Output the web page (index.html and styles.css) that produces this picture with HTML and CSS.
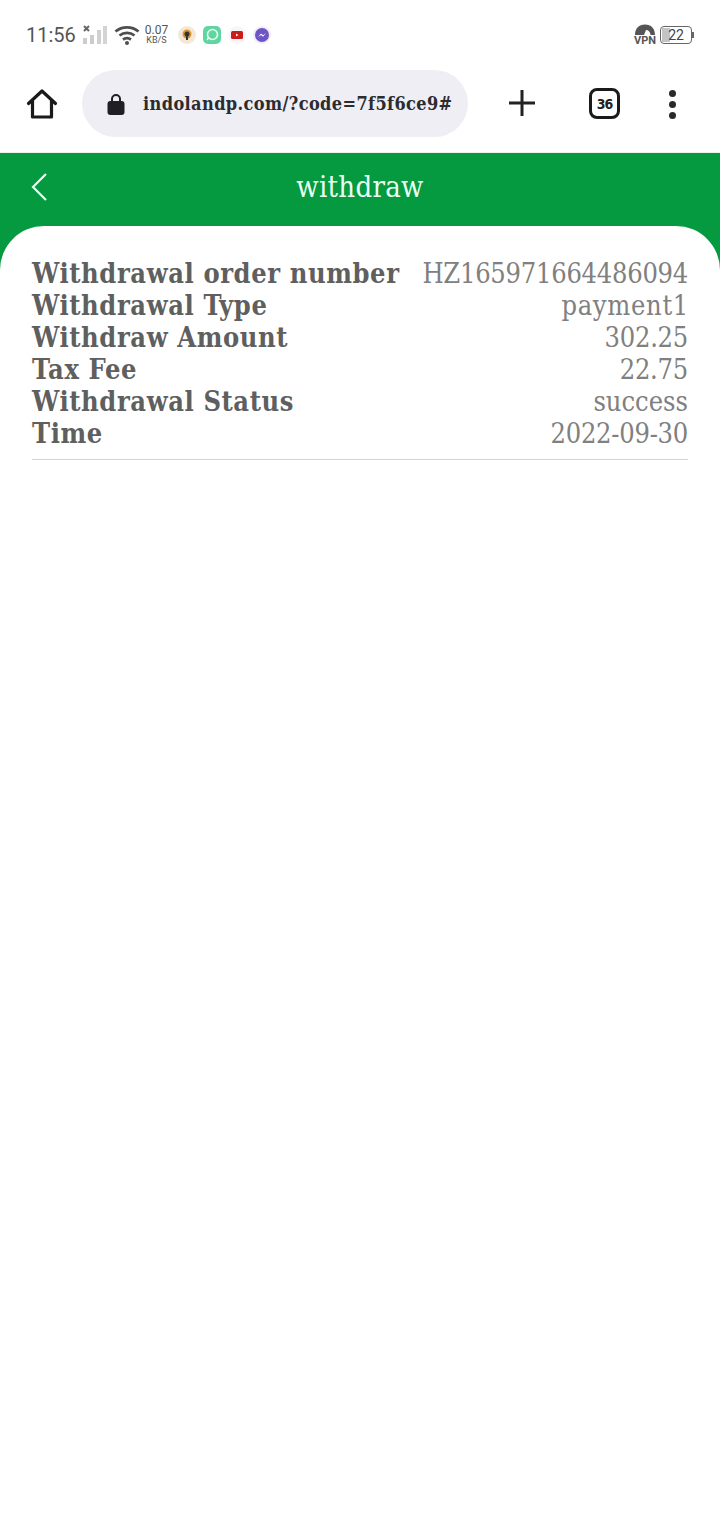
FILE: index.html
```html
<!DOCTYPE html>
<html lang="en">
<head>
    <meta charset="UTF-8">
    <title>withdraw</title>
    <link rel="stylesheet" href="styles.css">
</head>
<body>
    <div class="status-bar">
        <span class="clock">11:56</span>
        <svg class="signal" width="26" height="20" viewBox="0 0 26 20">
            <path d="M2 1l5 5M7 1L2 6" stroke="#666" stroke-width="2"/>
            <rect x="1" y="13" width="4" height="6" fill="#ccc"/>
            <rect x="8" y="10" width="4" height="9" fill="#ccc"/>
            <rect x="15" y="5" width="4" height="14" fill="#d0d0d0"/>
            <rect x="21" y="1" width="4" height="18" fill="#d4d4d4"/>
        </svg>
        <svg class="wifi" width="26" height="20" viewBox="0 0 26 20">
            <path d="M1.500 6.500C8 1 18 1 24.500 6.500M5.500 10.500C10 7 16 7 20.500 10.500M9 14.500c2.500-1.800 5.500-1.800 8 0" fill="none" stroke="#4f4f4f" stroke-width="2.800"/>
            <circle cx="13" cy="18" r="2" fill="#4f4f4f"/>
        </svg>
        <div class="speed">
            <span class="speed-num">0.07</span>
            <span class="speed-unit">KB/S</span>
        </div>
        <div class="app-icons">
            <svg width="20" height="20" viewBox="0 0 20 20">
                <circle cx="10" cy="10" r="9" fill="#f3e8d8"/>
                <circle cx="10" cy="9" r="4.500" fill="#d9952f"/>
                <circle cx="10" cy="9" r="2.500" fill="#333"/>
                <rect x="9" y="9" width="2" height="6" fill="#333"/>
            </svg>
            <svg width="20" height="20" viewBox="0 0 20 20">
                <rect x="1" y="1" width="18" height="18" rx="5" fill="#5fd6a0"/>
                <circle cx="10.500" cy="9.500" r="5" fill="none" stroke="#e8fff4" stroke-width="1.600"/>
                <path d="M5 15l2-3" stroke="#e8fff4" stroke-width="1.600"/>
            </svg>
            <svg width="20" height="20" viewBox="0 0 20 20">
                <circle cx="10" cy="10" r="9" fill="#f8f6f6"/>
                <rect x="4" y="6" width="12" height="8" rx="1.500" fill="#cf1a1a"/>
                <path d="M9 8.500v3l2.500-1.500z" fill="#fff"/>
            </svg>
            <svg width="20" height="20" viewBox="0 0 20 20">
                <circle cx="10" cy="10" r="9" fill="#f1edf6"/>
                <circle cx="10" cy="10" r="7" fill="#6d55c8"/>
                <path d="M6 12l3-3.500 2 1.800 3-2.300-3 3.800-2-1.800z" fill="#fff"/>
            </svg>
        </div>
        <div class="status-right">
            <div class="vpn">
                <svg width="22" height="11" viewBox="0 0 22 11">
                    <path d="M1 11C1 4.500 5 0.500 11 0.500S21 4.500 21 11h-4.500C16.500 8 14.500 6 12 6l-2 5z" fill="#555"/>
                </svg>
                <span class="vpn-label">VPN</span>
            </div>
            <div class="battery">
                <div class="battery-body">
                    <span class="battery-fill"></span>
                    <span class="battery-num">22</span>
                </div>
                <span class="battery-tip"></span>
            </div>
        </div>
    </div>

    <div class="browser-bar">
        <svg class="home" width="32" height="32" viewBox="0 0 32 32">
            <path d="M2.500 15.500L16 3l13.500 12.500M6.500 12.500V29h19V12.500" fill="none" stroke="#1a1a1a" stroke-width="3.200" stroke-linejoin="round" stroke-linecap="round"/>
        </svg>
        <div class="url-box">
            <svg width="18" height="24" viewBox="0 0 18 24">
                <path d="M5 10V7a4 4 0 0 1 8 0v3" fill="none" stroke="#1f1f24" stroke-width="2"/>
                <rect x="0.500" y="9" width="17" height="14" rx="3" fill="#1f1f24"/>
            </svg>
            <span class="url-text">indolandp.com/?code=7f5f6ce9#</span>
        </div>
        <svg class="plus" width="28" height="28" viewBox="0 0 28 28">
            <path d="M14 1v26M1 14h26" stroke="#222" stroke-width="3"/>
        </svg>
        <div class="tabs">36</div>
        <div class="menu-dots">
            <span></span>
            <span></span>
            <span></span>
        </div>
    </div>

    <div class="page">
        <div class="title-bar">
            <svg class="back" width="18" height="30" viewBox="0 0 18 30">
                <path d="M16 2L3 15l13 13" fill="none" stroke="#e6fff2" stroke-width="2.200"/>
            </svg>
            <span class="title">withdraw</span>
        </div>
        <div class="card">
            <div class="details">
                <div class="row"><span class="key">Withdrawal order number</span><span class="val num">HZ165971664486094</span></div>
                <div class="row"><span class="key">Withdrawal Type</span><span class="val word">payment1</span></div>
                <div class="row"><span class="key">Withdraw Amount</span><span class="val num">302.25</span></div>
                <div class="row"><span class="key">Tax Fee</span><span class="val num">22.75</span></div>
                <div class="row"><span class="key">Withdrawal Status</span><span class="val">success</span></div>
                <div class="row"><span class="key">Time</span><span class="val num">2022-09-30</span></div>
            </div>
        </div>
    </div>
</body>
</html>
```

FILE: styles.css
```css
/* General Styles */
html, body {
    height: 100%;
}

body {
    margin: 0;
    background-color: #fff;
    font-family: "Roboto", sans-serif;
    display: flex;
    flex-direction: column;
    overflow: hidden;
}

/* Phone status bar */
.status-bar {
    height: 70px;
    display: flex;
    align-items: center;
    padding: 0 26px;
    flex-shrink: 0;
}

.clock {
    font-size: 20px;
    color: #555;
    margin-right: 6px;
}

.signal {
    margin-right: 6px;
}

.wifi {
    margin-right: 5px;
}

.speed {
    display: flex;
    flex-direction: column;
    align-items: center;
    color: #555;
    line-height: 10px;
    margin-right: 9px;
}

.speed-num {
    font-size: 12px;
}

.speed-unit {
    font-size: 9px;
}

.app-icons {
    display: flex;
    gap: 5px;
}

.status-right {
    margin-left: auto;
    display: flex;
    align-items: center;
    gap: 4px;
}

.vpn {
    display: flex;
    flex-direction: column;
    align-items: center;
    color: #555;
}

.vpn svg {
    display: block;
}

.vpn-label {
    font-size: 11px;
    font-weight: 700;
    line-height: 11px;
}

.battery {
    display: flex;
    align-items: center;
}

.battery-body {
    position: relative;
    width: 32px;
    height: 18px;
    box-sizing: border-box;
    border: 1.5px solid #666;
    border-radius: 4px;
    display: flex;
    align-items: center;
    justify-content: center;
}

.battery-fill {
    position: absolute;
    left: 1px;
    top: 1px;
    bottom: 1px;
    width: 8px;
    background: #c4c4c4;
}

.battery-num {
    position: relative;
    font-size: 14px;
    color: #444;
}

.battery-tip {
    width: 2px;
    height: 6px;
    background: #666;
}

/* Browser toolbar */
.browser-bar {
    height: 82px;
    display: flex;
    align-items: flex-start;
    flex-shrink: 0;
    border-bottom: 1px solid #e3f5ea;
}

.home {
    margin: 18px 0 0 26px;
}

.url-box {
    margin: 0 0 0 24px;
    width: 386px;
    height: 67px;
    box-sizing: border-box;
    background: #eeeef4;
    border-radius: 34px;
    display: flex;
    align-items: center;
    padding-left: 25px;
}

.url-text {
    margin-left: 18px;
    font-family: "DejaVu Serif Condensed", "DejaVu Serif", serif;
    font-size: 18px;
    font-weight: 700;
    letter-spacing: 0.38px;
    color: #2b2b30;
    white-space: nowrap;
}

.plus {
    margin: 19px 0 0 40px;
}

.tabs {
    margin: 18px 0 0 53px;
    width: 31px;
    height: 31px;
    box-sizing: border-box;
    border: 3px solid #1a1a1a;
    border-radius: 8px;
    display: flex;
    align-items: center;
    justify-content: center;
    font-family: "DejaVu Sans Condensed", "Liberation Sans", sans-serif;
    font-size: 14px;
    font-weight: 700;
    letter-spacing: -1px;
    color: #222;
}

.menu-dots {
    margin: 20px 0 0 49px;
    display: flex;
    flex-direction: column;
    gap: 4px;
}

.menu-dots span {
    width: 7px;
    height: 7px;
    border-radius: 50%;
    background: #2a2a2a;
}

/* Withdraw page */
.page {
    flex: 1;
    display: flex;
    flex-direction: column;
    background: #059a40;
}

.title-bar {
    height: 73px;
    display: flex;
    align-items: center;
    justify-content: center;
    position: relative;
    flex-shrink: 0;
}

.back {
    position: absolute;
    left: 30px;
    top: 19px;
}

.title {
    font-family: "DejaVu Serif Condensed", "DejaVu Serif", serif;
    font-size: 29px;
    letter-spacing: 0.3px;
    color: #eafff4;
    margin-bottom: 5px;
}

.card {
    flex: 1;
    background: #fff;
    border-radius: 44px 44px 0 0;
    padding: 32px 32px 0;
}

.details {
    border-bottom: 1px solid #d4d4d4;
    padding-bottom: 9px;
}

.row {
    display: flex;
    justify-content: space-between;
    height: 32px;
    line-height: 32px;
    font-family: "DejaVu Serif Condensed", "DejaVu Serif", serif;
    font-size: 27px;
}

.key {
    font-weight: 700;
    color: #5f5f5f;
    letter-spacing: 0.6px;
}

.val {
    color: #808080;
}

.val.num {
    letter-spacing: -0.25px;
}

.val.word {
    letter-spacing: 0.7px;
    margin-right: -1px;
}
```
